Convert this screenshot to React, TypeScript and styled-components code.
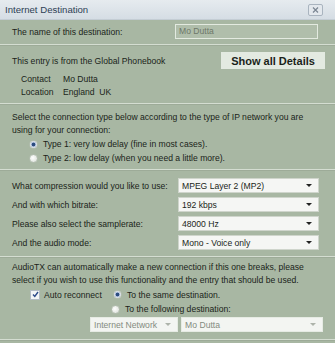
import React from 'react';
import styled, { createGlobalStyle } from 'styled-components';

const Global = createGlobalStyle`
  html, body {
    margin: 0;
    padding: 0;
    background: #a8b7a3;
  }
  body {
    font-family: "Liberation Sans", Arial, sans-serif;
    font-size: 8.6px;
    color: #1a1f19;
  }
`;

const Window = styled.div`
  width: 335px;
  height: 343px;
  display: flex;
  flex-direction: column;
  background: #a8b7a3;
  overflow: hidden;
`;

const TitleBar = styled.div`
  height: 19px;
  display: flex;
  align-items: center;
  justify-content: space-between;
  padding: 0 12px 0 5px;
  background: linear-gradient(#e6ebef, #d5dde4);
  border-bottom: 1px solid #c4cdd4;
  color: #2e3f55;
  font-size: 9.6px;
`;

const CloseButton = styled.div`
  width: 13px;
  height: 10px;
  border: 1px solid #a9b4bf;
  border-radius: 2px;
  background: #e3e8ed;
  display: flex;
  align-items: center;
  justify-content: center;
`;

const Section = styled.div<{ $pad?: string }>`
  padding: ${(p) => p.$pad ?? '6px 12px'};
  border-bottom: 1px solid #d4ddd1;
  box-shadow: 0 1px 0 #9dab98;
`;

const Row = styled.div<{ $h?: number; $indent?: number }>`
  display: flex;
  align-items: center;
  height: ${(p) => p.$h ?? 13}px;
  padding-left: ${(p) => p.$indent ?? 0}px;
  white-space: nowrap;
`;

const Label = styled.span<{ $w?: number }>`
  width: ${(p) => (p.$w ? `${p.$w}px` : 'auto')};
  flex: ${(p) => (p.$w ? 'none' : '1')};
`;

const NameInput = styled.div`
  width: 138px;
  height: 13px;
  border: 1px solid #e3eae0;
  background: #b0beab;
  color: #6e7869;
  padding-left: 3px;
  line-height: 13px;
  margin-right: 5px;
`;

const DetailsButton = styled.div`
  width: 104px;
  height: 17px;
  background: #e3eae1;
  font-weight: bold;
  font-size: 11px;
  display: flex;
  align-items: center;
  justify-content: center;
  margin-right: -2px;
`;

const Select = styled.div<{ $w: number; $disabled?: boolean }>`
  width: ${(p) => p.$w}px;
  height: 13px;
  box-sizing: content-box;
  border: 1px solid ${(p) => (p.$disabled ? '#e6ebe4' : '#cfd5cc')};
  background: ${(p) => (p.$disabled ? '#f3f5f2' : '#f5f6f4')};
  color: ${(p) => (p.$disabled ? '#838b80' : '#1a1f19')};
  display: flex;
  align-items: center;
  padding-left: 3px;
  font-size: 8.6px;
  span {
    flex: 1;
  }
  svg {
    margin: 0 6px 0 4px;
  }
`;

const Radio = styled.span<{ $on?: boolean }>`
  width: 7px;
  height: 7px;
  flex: none;
  border-radius: 50%;
  margin-right: 5px;
  background: ${(p) =>
    p.$on
      ? 'radial-gradient(circle, #2c4c80 0 1.6px, #b8c7de 2.2px 2.8px, #eef1f4 3.2px)'
      : 'radial-gradient(circle at 40% 40%, #ffffff, #d6dcd4)'};
  border: 1px solid #b3beb0;
`;

const Check = styled.span`
  width: 8px;
  height: 8px;
  flex: none;
  margin-right: 4px;
  background: #f3f5f7;
  border: 1px solid #b3bcc5;
  display: flex;
  align-items: center;
  justify-content: center;
`;

const Arrow: React.FC<{ color?: string }> = ({ color = '#222' }) => (
  <svg width="6" height="3" viewBox="0 0 6 3">
    <path d="M0 0 L6 0 L3 3 Z" fill={color} />
  </svg>
);

const App: React.FC = () => {
  return (
    <Window>
      <Global />
      <TitleBar>
        <span>Internet Destination</span>
        <CloseButton>
          <svg width="7" height="6" viewBox="0 0 7 6">
            <path d="M1 0.5 L6 5.5 M6 0.5 L1 5.5" stroke="#7a8592" strokeWidth="1.2" />
          </svg>
        </CloseButton>
      </TitleBar>

      <Section $pad="4px 12px 5px 12px">
        <Row $h={15}>
          <Label>The name of this destination:</Label>
          <NameInput>Mo Dutta</NameInput>
        </Row>
      </Section>

      <Section $pad="7px 12px 5px 12px">
        <Row $h={17}>
          <Label>This entry is from the Global Phonebook</Label>
          <DetailsButton>Show all Details</DetailsButton>
        </Row>
        <Row $h={13} $indent={9} style={{ marginTop: 3 }}>
          <Label $w={42}>Contact</Label>
          <span>Mo Dutta</span>
        </Row>
        <Row $h={13} $indent={9}>
          <Label $w={42}>Location</Label>
          <span>England&nbsp; UK</span>
        </Row>
      </Section>

      <Section $pad="6px 12px 4px 12px">
        <Row $h={13}>Select the connection type below according to the type of IP network you are</Row>
        <Row $h={13}>using for your connection:</Row>
        <Row $h={14} $indent={17} style={{ marginTop: 1 }}>
          <Radio $on />
          Type 1: very low delay (fine in most cases).
        </Row>
        <Row $h={14} $indent={17}>
          <Radio />
          Type 2: low delay (when you need a little more).
        </Row>
      </Section>

      <Section $pad="6px 12px 4px 12px">
        {[
          ['What compression would you like to use:', 'MPEG Layer 2 (MP2)'],
          ['And with which bitrate:', '192 kbps'],
          ['Please also select the samplerate:', '48000 Hz'],
          ['And the audio mode:', 'Mono - Voice only'],
        ].map(([label, value]) => (
          <Row key={label} $h={19}>
            <Label $w={166}>{label}</Label>
            <Select $w={136}>
              <span>{value}</span>
              <Arrow />
            </Select>
          </Row>
        ))}
      </Section>

      <Section $pad="3px 12px 6px 12px">
        <Row $h={13}>AudioTX can automatically make a new connection if this one breaks, please</Row>
        <Row $h={13}>select if you wish to use this functionality and the entry that should be used.</Row>
        <Row $h={15} $indent={18} style={{ marginTop: 1 }}>
          <Check>
            <svg width="7" height="7" viewBox="0 0 7 7">
              <path d="M1 3.5 L2.8 5.5 L6 1" stroke="#2c4a8a" strokeWidth="1.4" fill="none" />
            </svg>
          </Check>
          <Label $w={69}>Auto reconnect</Label>
          <Radio $on />
          To the same destination.
        </Row>
        <Row $h={14} $indent={99}>
          <Radio />
          To the following destination:
        </Row>
        <Row $h={17} $indent={78}>
          <Select $w={85} $disabled>
            <span>Internet Network</span>
            <Arrow color="#adb3aa" />
          </Select>
          <Select $w={140} $disabled style={{ marginLeft: 3 }}>
            <span>Mo Dutta</span>
            <Arrow color="#adb3aa" />
          </Select>
        </Row>
      </Section>
    </Window>
  );
};

export default App;
